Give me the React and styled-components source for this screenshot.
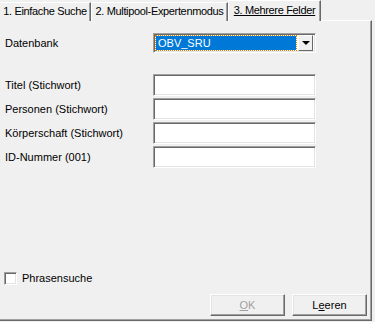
import React from 'react'
import styled, { createGlobalStyle } from 'styled-components'

const Global = createGlobalStyle`
  html, body {
    margin: 0;
    padding: 0;
    background: #f0f0f0;
  }
  * {
    box-sizing: border-box;
  }
`

const Window = styled.div`
  width: 375px;
  height: 322px;
  background: #f0f0f0;
  font-family: "Liberation Sans", Arial, sans-serif;
  font-size: 11px;
  color: #000;
  display: flex;
  flex-direction: column;
  overflow: hidden;
`

const TabBar = styled.div`
  display: flex;
  align-items: flex-end;
  height: 21px;
  position: relative;
  z-index: 1;
`

const Tab = styled.div`
  height: ${p => (p.$active ? '21px' : '19px')};
  width: ${p => p.$w}px;
  margin-left: ${p => (p.$first ? '-1px' : '0')};
  padding-top: ${p => (p.$active ? '3px' : '2px')};
  text-align: center;
  background: #f0f0f0;
  border-top: 1px solid #fff;
  border-left: 1px solid #fff;
  border-right: 1px solid #696969;
  box-shadow: inset -1px 0 #a0a0a0;
  white-space: nowrap;
  letter-spacing: -0.35px;

  span {
    text-decoration: ${p => (p.$active ? 'underline' : 'none')};
  }
`

const Panel = styled.div`
  flex: 1;
  margin-top: -1px;
  margin-right: 3px;
  margin-bottom: 1px;
  border-top: 1px solid #fff;
  border-right: 1px solid #696969;
  border-bottom: 1px solid #696969;
  box-shadow: inset -1px -1px #a0a0a0;
  display: flex;
  flex-direction: column;
  padding: 12px 0 0 5px;
`

const Row = styled.div`
  display: flex;
  align-items: center;
  height: ${p => p.$h || 24}px;
`

const Label = styled.div`
  width: 148px;
`

const Combo = styled.div`
  width: 163px;
  height: 20px;
  background: #fff;
  border-top: 1px solid #a0a0a0;
  border-left: 1px solid #a0a0a0;
  border-right: 1px solid #fff;
  border-bottom: 1px solid #fff;
  box-shadow: inset 1px 1px #696969, inset -1px -1px #e3e3e3;
  display: flex;
  align-items: center;
  padding: 2px;
`

const Selected = styled.div`
  flex: 1;
  height: 14px;
  background: #0078d7;
  color: #fff;
  outline: 1px dotted #e08000;
  padding-left: 2px;
  line-height: 14px;
  margin-right: 2px;
`

const DropButton = styled.div`
  width: 15px;
  height: 16px;
  background: #f0f0f0;
  border-top: 1px solid #fff;
  border-left: 1px solid #fff;
  border-right: 1px solid #696969;
  border-bottom: 1px solid #696969;
  display: flex;
  align-items: center;
  justify-content: center;
`

const Arrow = styled.div`
  width: 0;
  height: 0;
  border-left: 4px solid transparent;
  border-right: 4px solid transparent;
  border-top: 4px solid #000;
`

const Field = styled.div`
  width: 163px;
  height: 22px;
  background: #fff;
  border-top: 1px solid #a0a0a0;
  border-left: 1px solid #a0a0a0;
  border-right: 1px solid #fff;
  border-bottom: 1px solid #fff;
  box-shadow: inset 1px 1px #696969, inset -1px -1px #e3e3e3;
`

const Spacer = styled.div`
  height: ${p => p.$h}px;
  flex: ${p => (p.$grow ? 1 : 'none')};
`

const CheckRow = styled.div`
  display: flex;
  align-items: center;
  gap: 5px;
  margin-left: -1px;
  height: 14px;
`

const Box = styled.div`
  width: 13px;
  height: 13px;
  background: #fff;
  border-top: 1px solid #a0a0a0;
  border-left: 1px solid #a0a0a0;
  border-right: 1px solid #fff;
  border-bottom: 1px solid #fff;
  box-shadow: inset 1px 1px #696969, inset -1px -1px #e3e3e3;
`

const ButtonRow = styled.div`
  display: flex;
  justify-content: flex-end;
  gap: 7px;
  padding-right: 4px;
  margin-top: 9px;
  margin-bottom: 4px;
`

const Button = styled.div`
  width: 75px;
  height: 22px;
  background: #f0f0f0;
  border-top: 1px solid #fff;
  border-left: 1px solid #fff;
  border-right: 1px solid #696969;
  border-bottom: 1px solid #696969;
  box-shadow: inset -1px -1px #a0a0a0, inset 1px 1px #e3e3e3;
  display: flex;
  align-items: center;
  justify-content: center;
  color: ${p => (p.$disabled ? '#a0a0a0' : '#000')};

  u {
    text-decoration: underline;
  }
`

const fields = [
  'Titel (Stichwort)',
  'Personen (Stichwort)',
  'Körperschaft (Stichwort)',
  'ID-Nummer (001)',
]

export default function App() {
  return (
    <Window>
      <Global />
      <TabBar>
        <Tab $w={92} $first><span>1. Einfache Suche</span></Tab>
        <Tab $w={137}><span>2. Multipool-Expertenmodus</span></Tab>
        <Tab $w={93} $active><span>3. Mehrere Felder</span></Tab>
      </TabBar>
      <Panel>
        <Row $h={20}>
          <Label>Datenbank</Label>
          <Combo>
            <Selected>OBV_SRU</Selected>
            <DropButton><Arrow /></DropButton>
          </Combo>
        </Row>
        <Spacer $h={20} />
        {fields.map(f => (
          <Row key={f} $h={24}>
            <Label>{f}</Label>
            <Field />
          </Row>
        ))}
        <Spacer $grow />
        <CheckRow>
          <Box />
          <span>Phrasensuche</span>
        </CheckRow>
        <ButtonRow>
          <Button $disabled><span><u>O</u>K</span></Button>
          <Button><span>L<u>e</u>eren</span></Button>
        </ButtonRow>
      </Panel>
    </Window>
  )
}
